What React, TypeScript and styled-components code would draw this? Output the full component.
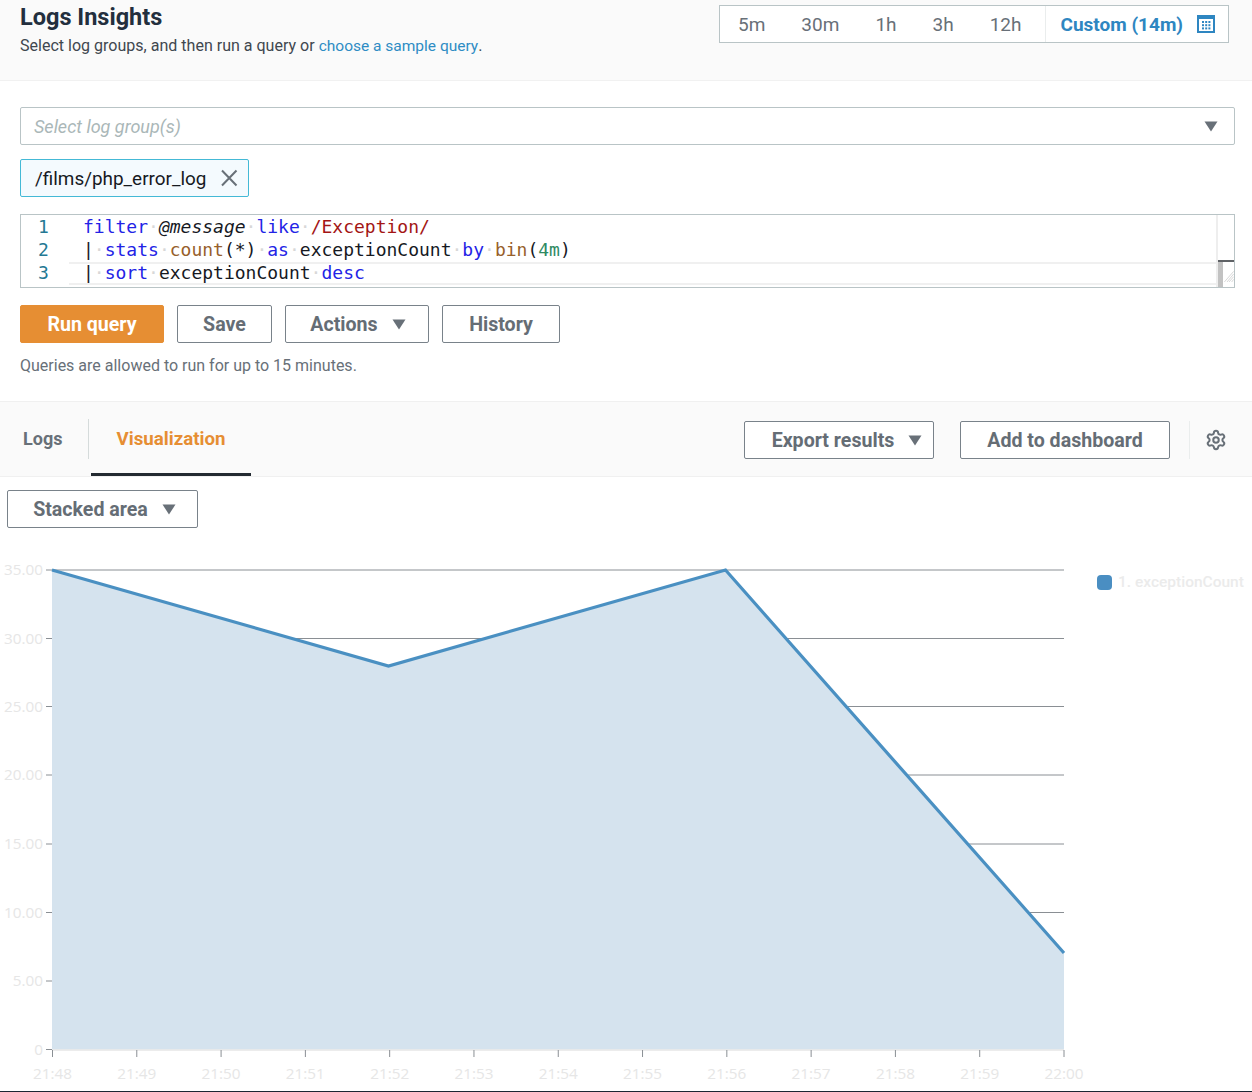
import React from "react";
import styled, { createGlobalStyle } from "styled-components";
import { Settings } from "lucide-react";

const Global = createGlobalStyle`
  html, body { margin: 0; padding: 0; background: #fff; }
  body { font-family: "Roboto", "Liberation Sans", sans-serif; color: #16191f; }
  * { box-sizing: border-box; }
`;

const Page = styled.div`
  width: 1252px;
  height: 1092px;
  overflow: hidden;
  display: flex;
  flex-direction: column;
`;

const Header = styled.header`
  height: 81px;
  flex: none;
  background: #fafafa;
  border-bottom: 1px solid #f1f1f1;
  padding: 4px 23px 0 20px;
  display: flex;
  justify-content: space-between;
  align-items: flex-start;
`;
const Title = styled.h1`
  margin: 0;
  font-size: 23.5px;
  line-height: 26px;
  font-weight: 700;
  color: #232f3e;
`;
const Sub = styled.p`
  margin: 6px 0 0;
  font-size: 16.05px;
  line-height: 20px;
  color: #3f474f;
`;
const Link = styled.span`
  color: #2e8cc4;
  font-size: 15.5px;
`;
const Range = styled.div`
  margin-top: 1px;
  width: 510px;
  height: 38px;
  background: #fff;
  border: 1px solid #b9c4c6;
  display: flex;
  align-items: stretch;
`;
const RangeItem = styled.div`
  padding: 0 18px;
  font-size: 19px;
  color: #687078;
  display: flex;
  align-items: center;
`;
const RangeSpacer = styled.div`
  width: 5px;
`;
const RangeCustom = styled.div`
  flex: 1;
  border-left: 1px solid #eaeded;
  padding: 0 13px 0 15px;
  font-size: 19px;
  font-weight: 700;
  color: #2e86c1;
  display: flex;
  align-items: center;
  justify-content: space-between;
`;

const Query = styled.section`
  height: 320px;
  flex: none;
  padding: 26px 17px 0 20px;
  display: flex;
  flex-direction: column;
`;
const Select = styled.div`
  height: 38px;
  border: 1px solid #b9c4c6;
  border-radius: 2px;
  padding: 0 16px 0 13px;
  display: flex;
  align-items: center;
  justify-content: space-between;
  font-size: 18px;
  font-style: italic;
  color: #aab7b8;
`;
const Chip = styled.div`
  margin-top: 14px;
  width: 229px;
  height: 38px;
  border: 1px solid #44b9d6;
  border-radius: 2px;
  background: #f4fafe;
  padding: 0 9px 0 14px;
  display: flex;
  align-items: center;
  justify-content: space-between;
  font-size: 18.9px;
  color: #16191f;
`;
const Editor = styled.div`
  margin-top: 17px;
  height: 74px;
  border: 1px solid #b9c4c6;
  display: flex;
  overflow: hidden;
`;
const Gutter = styled.div`
  width: 48px;
  flex: none;
  padding-top: 1px;
`;
const LineNo = styled.div`
  height: 23px;
  padding-left: 17px;
  font: 18px/21px "DejaVu Sans Mono", monospace;
  color: #237893;
`;
const Code = styled.div`
  flex: 1;
  padding-top: 1px;
`;
const CodeLine = styled.div<{ $active?: boolean }>`
  height: 23px;
  padding-left: 14px;
  font-family: "DejaVu Sans Mono", monospace;
  font-size: 18px;
  white-space: pre;
  color: #16191f;
  border-top: ${(p) => (p.$active ? "2px solid #f0f0f0" : "none")};
  border-bottom: ${(p) => (p.$active ? "2px solid #f0f0f0" : "none")};
  line-height: ${(p) => (p.$active ? "17px" : "21px")};
`;
const Kw = styled.span`
  color: #2323e6;
`;
const Fn = styled.span`
  color: #97602b;
`;
const Num = styled.span`
  color: #2f8a63;
`;
const Re = styled.span`
  color: #a31515;
`;
const Em = styled.span`
  font-style: italic;
`;
const Dot = styled.span`
  color: #d8d8d8;
`;
const Scroll = styled.div`
  width: 18px;
  flex: none;
  border-left: 2px solid #eeeeee;
  display: flex;
  flex-direction: column;
  justify-content: flex-end;
`;
const ScrollThumb = styled.div`
  height: 27px;
  border-top: 2px solid #5f6266;
  display: flex;
`;
const ScrollBar = styled.div`
  width: 8px;
  background: #c2c2c2;
`;

const Buttons = styled.div`
  margin-top: 17px;
  display: flex;
  gap: 13px;
`;
const Btn = styled.div<{ $w: number; $primary?: boolean; $lead?: number }>`
  width: ${(p) => p.$w}px;
  height: 38px;
  flex: none;
  border: 1px solid ${(p) => (p.$primary ? "#e68e33" : "#79828a")};
  background: ${(p) => (p.$primary ? "#e68e33" : "#fff")};
  color: ${(p) => (p.$primary ? "#fff" : "#656d75")};
  border-radius: 2px;
  font-size: 19.6px;
  font-weight: 700;
  display: flex;
  align-items: center;
  justify-content: center;
  gap: 14px;
  padding: 1px 0 0 ${(p) => p.$lead ?? 0}px;
`;
const Note = styled.p`
  margin: 13px 0 0;
  font-size: 16px;
  line-height: 20px;
  color: #687078;
`;

const TabBar = styled.div`
  height: 76px;
  flex: none;
  background: #fafafa;
  border-top: 1px solid #f0f0f0;
  border-bottom: 1px solid #f0f0f0;
  display: flex;
  align-items: stretch;
`;
const TabLogs = styled.div`
  width: 88px;
  padding: 0 0 1px 23px;
  font-size: 18px;
  font-weight: 700;
  color: #687078;
  display: flex;
  align-items: center;
`;
const TabDivider = styled.div`
  width: 1px;
  height: 40px;
  margin-top: 17px;
  background: #d5dbdb;
`;
const TabVis = styled.div`
  width: 160px;
  margin-left: 2px;
  font-size: 18.7px;
  font-weight: 700;
  color: #e68e33;
  border-bottom: 3px solid #232a31;
  display: flex;
  align-items: center;
  justify-content: center;
  padding-top: 3px;
`;
const TabActions = styled.div`
  margin-left: auto;
  display: flex;
  align-items: center;
  gap: 26px;
  padding-right: 25px;
  padding-top: 1px;
`;
const GearWrap = styled.div`
  height: 38px;
  border-left: 1px solid #eaeded;
  margin-left: -7px;
  padding-left: 15px;
  display: flex;
  align-items: center;
  color: #687078;
`;

const ChartToolbar = styled.div`
  padding: 13px 0 0 7px;
  flex: none;
`;
const ChartRow = styled.div`
  display: flex;
  margin-top: 12px;
  flex: 1;
`;
const ChartSvg = styled.svg`
  display: block;
  flex: none;
`;
const AxisText = styled.text`
  font-family: "Open Sans", sans-serif;
  font-size: 15.3px;
  fill: #e6e6e6;
`;
const Legend = styled.div`
  margin: 33px 0 0 12px;
  display: flex;
  align-items: center;
  gap: 6px;
  height: 18px;
  font-size: 15.5px;
  font-weight: 500;
  color: #ebebeb;
  white-space: nowrap;
`;
const Swatch = styled.span`
  width: 15px;
  height: 15px;
  border-radius: 4px;
  background: #4a8ec2;
  flex: none;
`;
const BottomEdge = styled.div`
  height: 1px;
  flex: none;
  background: #1b2733;
`;

const Caret = ({ c = "#687078" }: { c?: string }) => (
  <svg width="14" height="11" viewBox="0 0 14 11">
    <path d="M0.5 0.5H13.5L7 10.5Z" fill={c} />
  </svg>
);

const CloseX = () => (
  <svg width="20" height="20" viewBox="0 0 20 20">
    <path d="M3 2.5L17.5 17.5M17.5 2.5L3 17.5" stroke="#687078" strokeWidth="2" />
  </svg>
);

const Calendar = () => (
  <svg width="18" height="18" viewBox="0 0 18 18">
    <rect x="1" y="1" width="16" height="16" fill="none" stroke="#2e86c1" strokeWidth="2" />
    <rect x="1" y="1" width="16" height="3" fill="#2e86c1" />
    {[5, 8.2, 11.4].flatMap((x) =>
      [6, 9.2, 12.4].map((y) => <rect key={`${x}-${y}`} x={x} y={y} width="2" height="2" fill="#2e86c1" />)
    )}
  </svg>
);

const Hatch = () => (
  <svg width="16" height="24" viewBox="0 0 16 24">
    <path d="M16 8L2 24M16 12L6 24M16 16L9 24M16 20L13 24" stroke="#c4c4c4" strokeWidth="1" />
  </svg>
);

const Sp = () => <Dot>·</Dot>;

const yTicks = [
  ["35.00", 570],
  ["30.00", 638.5],
  ["25.00", 706.5],
  ["20.00", 775],
  ["15.00", 844],
  ["10.00", 912.5],
  ["5.00", 981],
  ["0", 1049.5],
] as const;
const xLabels = ["21:48", "21:49", "21:50", "21:51", "21:52", "21:53", "21:54", "21:55", "21:56", "21:57", "21:58", "21:59", "22:00"];
const xAt = (i: number) => 52.5 + (i * (1064 - 52.5)) / 12;

const Chart = () => (
  <ChartSvg width="1085" height="551" viewBox="0 540 1085 551">
    {yTicks.map(([label, y]) => (
      <g key={label}>
        <line x1="46" x2={label === "0" ? 52 : 1064} y1={y} y2={y} stroke="#8a8f94" strokeWidth="1" />
        <AxisText x="43" y={y + 5} textAnchor="end">
          {label}
        </AxisText>
      </g>
    ))}
    <path d="M52 570L388.5 666L725.5 570L1064 953V1049.5H52Z" fill="#d5e3ee" />
    <path d="M52 570L388.5 666L725.5 570L1064 953" fill="none" stroke="#4a90c2" strokeWidth="3.2" />
    <line x1="52" x2="1064" y1="1050" y2="1050" stroke="#e6e6e6" strokeWidth="1.5" />
    {xLabels.map((l, i) => (
      <g key={l}>
        <line x1={xAt(i)} x2={xAt(i)} y1="1050" y2="1057" stroke="#8a8f94" strokeWidth="1" />
        <AxisText x={xAt(i)} y="1079" textAnchor="middle">
          {l}
        </AxisText>
      </g>
    ))}
  </ChartSvg>
);

export default function App() {
  return (
    <Page>
      <Global />
      <Header>
        <div>
          <Title>Logs Insights</Title>
          <Sub>
            Select log groups, and then run a query or <Link>choose a sample query</Link>.
          </Sub>
        </div>
        <Range>
          <RangeItem>5m</RangeItem>
          <RangeItem>30m</RangeItem>
          <RangeItem>1h</RangeItem>
          <RangeItem>3h</RangeItem>
          <RangeItem>12h</RangeItem>
          <RangeSpacer />
          <RangeCustom>
            Custom (14m)
            <Calendar />
          </RangeCustom>
        </Range>
      </Header>

      <Query>
        <Select>
          Select log group(s)
          <Caret />
        </Select>
        <Chip>
          /films/php_error_log
          <CloseX />
        </Chip>
        <Editor>
          <Gutter>
            <LineNo>1</LineNo>
            <LineNo>2</LineNo>
            <LineNo>3</LineNo>
          </Gutter>
          <Code>
            <CodeLine>
              <Kw>filter</Kw>
              <Sp />
              <Em>@message</Em>
              <Sp />
              <Kw>like</Kw>
              <Sp />
              <Re>/Exception/</Re>
            </CodeLine>
            <CodeLine>
              |<Sp />
              <Kw>stats</Kw>
              <Sp />
              <Fn>count</Fn>(*)
              <Sp />
              <Kw>as</Kw>
              <Sp />
              exceptionCount
              <Sp />
              <Kw>by</Kw>
              <Sp />
              <Fn>bin</Fn>(<Num>4m</Num>)
            </CodeLine>
            <CodeLine $active>
              |<Sp />
              <Kw>sort</Kw>
              <Sp />
              exceptionCount
              <Sp />
              <Kw>desc</Kw>
            </CodeLine>
          </Code>
          <Scroll>
            <ScrollThumb>
              <ScrollBar />
              <Hatch />
            </ScrollThumb>
          </Scroll>
        </Editor>
        <Buttons>
          <Btn $w={144} $primary>
            Run query
          </Btn>
          <Btn $w={95}>Save</Btn>
          <Btn $w={144} $lead={2}>
            Actions
            <Caret />
          </Btn>
          <Btn $w={118}>History</Btn>
        </Buttons>
        <Note>Queries are allowed to run for up to 15 minutes.</Note>
      </Query>

      <TabBar>
        <TabLogs>Logs</TabLogs>
        <TabDivider />
        <TabVis>Visualization</TabVis>
        <TabActions>
          <Btn $w={190} $lead={16}>
            Export results
            <Caret />
          </Btn>
          <Btn $w={210}>Add to dashboard</Btn>
          <GearWrap>
            <Settings size={22} strokeWidth={2.2} />
          </GearWrap>
        </TabActions>
      </TabBar>

      <ChartToolbar>
        <Btn $w={191} $lead={4}>
          Stacked area
          <Caret />
        </Btn>
      </ChartToolbar>
      <ChartRow>
        <Chart />
        <Legend>
          <Swatch />
          1. exceptionCount
        </Legend>
      </ChartRow>
      <BottomEdge />
    </Page>
  );
}
